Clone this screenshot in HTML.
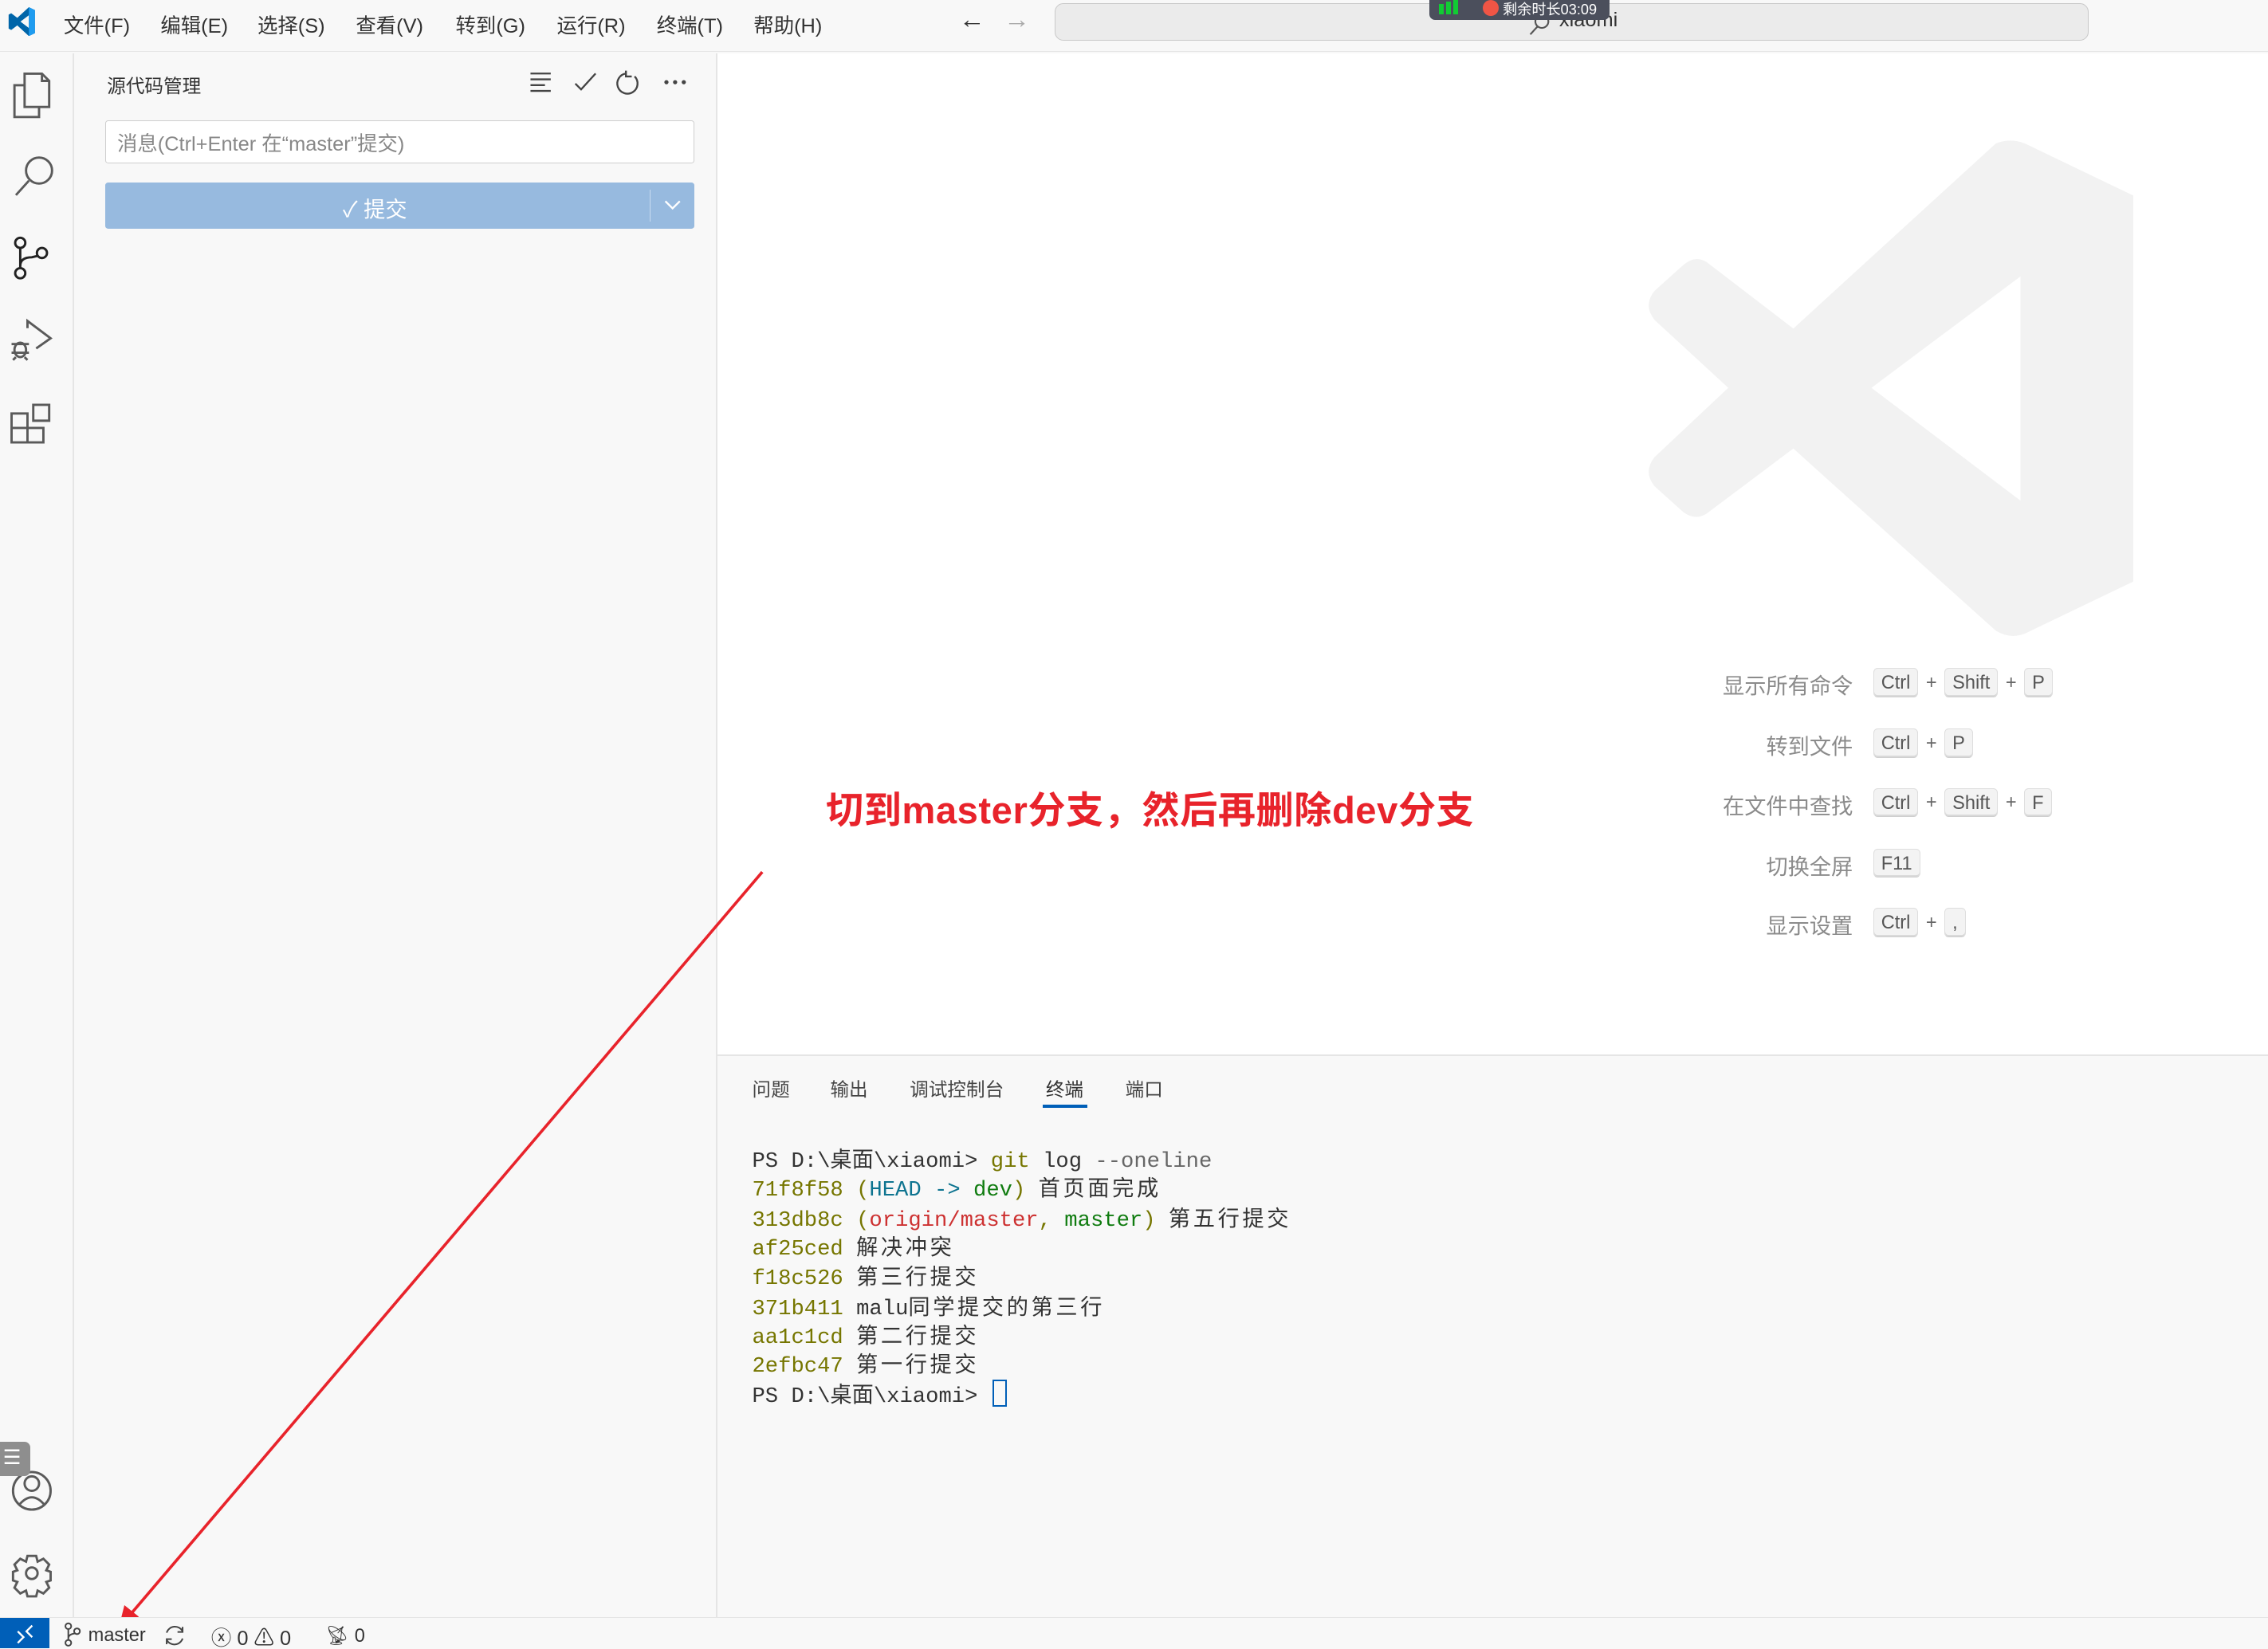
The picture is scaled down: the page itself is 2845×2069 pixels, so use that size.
<!DOCTYPE html>
<html><head><meta charset="utf-8">
<style>
*{margin:0;padding:0;box-sizing:border-box}
html,body{width:2845px;height:2069px;overflow:hidden;background:#f8f8f8}
#w{zoom:1.81441;width:1568px;height:1140px;position:relative;font-family:"Liberation Sans","Noto Sans CJK SC",sans-serif;color:#3b3b3b;background:#f8f8f8}
.a{position:absolute}
.menu span{position:absolute;top:7px;font-size:14px;color:#333}
.mono{font-family:"Liberation Mono","Noto Sans CJK SC",monospace}
.kl{position:absolute;right:287px;font-size:15px;color:#8b8b8b;white-space:nowrap}
.keys{position:absolute;left:1295px;font-size:13px;color:#555;white-space:nowrap}
.k{display:inline-block;height:20px;line-height:19px;padding:0 5px;background:#f3f3f3;border:1px solid #dedede;border-bottom-color:#cfcfcf;box-shadow:inset 0 -1px 0 #d8d8d8;border-radius:3px;vertical-align:middle}
.p{display:inline-block;width:18px;text-align:center;color:#666;vertical-align:middle}
.t{position:absolute;left:520px;font-size:15px;white-space:pre;color:#333}
.t i{font-style:normal;letter-spacing:2px}
.y{color:#767600}
.tab{position:absolute;top:743px;font-size:13px;color:#444}
</style></head><body><div id="w">
<div class="a" style="left:0;top:0;width:1568px;height:36px;background:#f8f8f8;border-bottom:1px solid #e5e5e5"></div>
<svg class="a" style="left:5px;top:5px" width="20" height="20" viewBox="0 0 100 100"><path d="M96 10 L75 0 L35 37 L14 21 L5 26 L5 74 L14 79 L35 63 L75 100 L96 90 Z M75 28 L75 72 L46 50 Z" fill="#0065a9" fill-rule="evenodd"/><path d="M75 0 L96 10 L96 90 L75 100 Z" fill="#1f9cf0"/></svg>
<div class="menu"><span style="left:44px">文件(F)</span><span style="left:111px">编辑(E)</span><span style="left:178px">选择(S)</span><span style="left:246px">查看(V)</span><span style="left:315px">转到(G)</span><span style="left:385px">运行(R)</span><span style="left:454px">终端(T)</span><span style="left:521px">帮助(H)</span></div>
<div class="a" style="left:663px;top:3px;font-size:18px;color:#333">←</div>
<div class="a" style="left:694px;top:3px;font-size:18px;color:#aaa">→</div>
<div class="a" style="left:729px;top:2px;width:715px;height:26px;background:#ebebeb;border:1px solid #c8c8c8;border-radius:6px"></div>
<svg class="a" style="left:1056px;top:9px" width="16" height="16" viewBox="0 0 16 16"><circle cx="10" cy="6" r="4.5" fill="none" stroke="#555" stroke-width="1.2"/><path d="M7 9.5 L2 15" stroke="#555" stroke-width="1.2"/></svg>
<div class="a" style="left:1078px;top:6px;font-size:14px;color:#333">xiaomi</div>
<div class="a" style="left:988px;top:0;width:125px;height:14px;background:#4b4f5c;border-radius:0 0 4px 4px"></div>
<div class="a" style="left:995px;top:3px;width:3px;height:7px;background:#1c3"></div><div class="a" style="left:1000px;top:1px;width:3px;height:9px;background:#1c3"></div><div class="a" style="left:1005px;top:0px;width:3px;height:10px;background:#1c3"></div>
<div class="a" style="left:1025px;top:0;width:11px;height:11px;border-radius:50%;background:#f05545"></div>
<div class="a" style="left:1039px;top:-1px;font-size:10px;color:#fff;white-space:nowrap">剩余时长03:09</div>
<div class="a" style="left:50px;top:37px;width:1px;height:1081px;background:#e5e5e5"></div>
<svg class="a" style="left:0;top:37px" width="50" height="1081" viewBox="0 37 50 1081" fill="none" stroke="#5a5a5a" stroke-width="1.6">
<path d="M17 59 H10 V81 H27 V74"/><path d="M17 51 H29 L34 56 V74 H17 Z M29 51 V56 H34"/>
<circle cx="27" cy="118" r="9"/><path d="M20 125 L11 135"/>
<circle cx="14" cy="168" r="3.5" stroke="#222"/><circle cx="14" cy="189" r="3.5" stroke="#222"/><circle cx="29" cy="175" r="3.5" stroke="#222"/><path d="M14 171.5 V185.5 M14 184 Q14 178 22 178 L26 177" stroke="#222"/>
<path d="M19 227 V222 L35 234 L25 241"/><ellipse cx="14" cy="242" rx="4" ry="5"/><path d="M8 238 H20 M8 244 H20 M9 249 L11 247 M19 249 L17 247"/>
<path d="M8 286 H19 V306 H8 Z M8 296 H30 V306 H19 M23 280 H34 V291 H23 Z"/>
<circle cx="22" cy="1031" r="13"/><circle cx="22" cy="1026" r="5"/><path d="M13 1041 Q22 1030 31 1041"/>
<circle cx="22" cy="1088" r="4"/><path d="M19 1076 H25 L26 1080 L30 1078 L34 1082 L32 1086 L35 1087 V1093 L32 1094 L34 1098 L30 1102 L26 1100 L25 1104 H19 L18 1100 L14 1102 L10 1098 L12 1094 L9 1093 V1087 L12 1086 L10 1082 L14 1078 L18 1080 Z"/>
</svg>
<div class="a" style="left:0;top:997px;width:21px;height:24px;background:#8e8e8e;border-radius:0 4px 4px 0"></div>
<div class="a" style="left:2px;top:1000px;font-size:14px;color:#fff;line-height:17px">☰</div>
<div class="a" style="left:495px;top:37px;width:1px;height:1081px;background:#e5e5e5"></div>
<div class="a" style="left:74px;top:49px;font-size:13px;color:#333">源代码管理</div>
<svg class="a" style="left:364px;top:47px" width="115" height="20" viewBox="0 0 115 20" fill="none" stroke="#444" stroke-width="1.3"><path d="M3 4 H17 M3 8 H17 M3 12 H13 M3 16 H17"/><path d="M34 11 L38 15 L48 4"/><path d="M69 4 A7 7 0 1 0 75 6 M69 2 V6 H73"/><circle cx="97" cy="10" r="0.8" fill="#444"/><circle cx="103" cy="10" r="0.8" fill="#444"/><circle cx="109" cy="10" r="0.8" fill="#444"/></svg>
<div class="a" style="left:73px;top:83px;width:407px;height:30px;background:#fff;border:1px solid #cecece;border-radius:2px"></div>
<div class="a" style="left:81px;top:89px;font-size:14px;color:#888">消息(Ctrl+Enter 在“master”提交)</div>
<div class="a" style="left:73px;top:126px;width:407px;height:32px;background:#97badf;border-radius:2px"></div>
<div class="a" style="left:237px;top:132px;font-size:15px;color:#fff">✓ 提交</div>
<div class="a" style="left:449px;top:131px;width:1px;height:22px;background:#c8dcf0"></div>
<svg class="a" style="left:458px;top:136px" width="14" height="12"><path d="M2 3 L7 8 L12 3" fill="none" stroke="#fff" stroke-width="1.3"/></svg>
<div class="a" style="left:496px;top:37px;width:1072px;height:692px;background:#fff"></div>
<svg class="a" style="left:1130px;top:88px" width="360" height="360" viewBox="1130 88 360 360"><path fill="#f2f2f2" fill-rule="evenodd" d="M1380 99 Q1390 95 1400 99 L1475 135 L1475 402 L1400 438 Q1390 442 1380 436 L1240 310 L1180 355 Q1172 360 1164 354 L1144 336 Q1136 326 1144 316 L1195 268 L1144 221 Q1136 211 1144 201 L1164 183 Q1172 176 1180 181 L1240 227 Z M1397 191 L1294 268 L1397 346 Z"/></svg>
<div class="kl" style="top:462px">显示所有命令</div><div class="keys" style="top:462px"><span class="k">Ctrl</span><span class="p">+</span><span class="k">Shift</span><span class="p">+</span><span class="k">P</span></div>
<div class="kl" style="top:504px">转到文件</div><div class="keys" style="top:504px"><span class="k">Ctrl</span><span class="p">+</span><span class="k">P</span></div>
<div class="kl" style="top:545px">在文件中查找</div><div class="keys" style="top:545px"><span class="k">Ctrl</span><span class="p">+</span><span class="k">Shift</span><span class="p">+</span><span class="k">F</span></div>
<div class="kl" style="top:587px">切换全屏</div><div class="keys" style="top:587px"><span class="k">F11</span></div>
<div class="kl" style="top:628px">显示设置</div><div class="keys" style="top:628px"><span class="k">Ctrl</span><span class="p">+</span><span class="k">,</span></div>
<div class="a" style="left:571px;top:539px;font-size:26px;font-weight:bold;color:#e8232b;white-space:nowrap;letter-spacing:0.3px">切到master分支，然后再删除dev分支</div>
<div class="a" style="left:496px;top:729px;width:1072px;height:1px;background:#e5e5e5"></div>
<div class="tab" style="left:520px">问题</div><div class="tab" style="left:574px">输出</div><div class="tab" style="left:629px">调试控制台</div><div class="tab" style="left:723px;color:#333">终端</div><div class="tab" style="left:778px">端口</div>
<div class="a" style="left:721px;top:764px;width:31px;height:2px;background:#005fb8"></div>
<div class="t mono" style="top:789px">PS D:\桌面\xiaomi&gt; <span class="y">git</span> log <span style="color:#666">--oneline</span></div>
<div class="t mono" style="top:809px"><span class="y">71f8f58 (</span><span style="color:#0e7490">HEAD -&gt; </span><span style="color:#107c10">dev</span><span class="y">)</span> <i>首页面完成</i></div>
<div class="t mono" style="top:830px"><span class="y">313db8c (</span><span style="color:#cd3131">origin/master</span><span class="y">, </span><span style="color:#107c10">master</span><span class="y">)</span> <i>第五行提交</i></div>
<div class="t mono" style="top:850px"><span class="y">af25ced</span> <i>解决冲突</i></div>
<div class="t mono" style="top:870px"><span class="y">f18c526</span> <i>第三行提交</i></div>
<div class="t mono" style="top:891px"><span class="y">371b411</span> malu<i>同学提交的第三行</i></div>
<div class="t mono" style="top:911px"><span class="y">aa1c1cd</span> <i>第二行提交</i></div>
<div class="t mono" style="top:931px"><span class="y">2efbc47</span> <i>第一行提交</i></div>
<div class="t mono" style="top:952px">PS D:\桌面\xiaomi&gt;</div>
<div class="a" style="left:686px;top:954px;width:10px;height:19px;border:1.5px solid #005fb8"></div>
<svg class="a" style="left:0;top:0" width="1568" height="1140"><path d="M527 603 L88 1119" stroke="#e8232b" stroke-width="2"/><path d="M82 1126 L86 1110 L96 1118 Z" fill="#e8232b"/></svg>
<div class="a" style="left:0;top:1118px;width:1568px;height:22px;background:#f8f8f8;border-top:1px solid #e5e5e5"></div>
<div class="a" style="left:0;top:1119px;width:34px;height:21px;background:#005fb8"></div>
<svg class="a" style="left:8px;top:1122px" width="18" height="16"><path d="M4 6 L8 10 L4 14 M14 2 L10 6 L14 10" fill="none" stroke="#fff" stroke-width="1.3"/></svg>
<svg class="a" style="left:40px;top:1121px" width="100" height="18" fill="none" stroke="#444" stroke-width="1.1"><circle cx="7" cy="3.5" r="2"/><circle cx="7" cy="15" r="2"/><circle cx="13" cy="7" r="2"/><path d="M7 5.5 V13 M7 12 Q7 9 12 8.5"/><path d="M75 8 A6 6 0 0 1 86 7 M86 12 A6 6 0 0 1 75 13 M86 4 V7.5 H82.5 M75 16 V12.5 H78.5"/></svg>
<div class="a" style="left:61px;top:1123px;font-size:13px;color:#333">master</div>
<div class="a" style="left:146px;top:1122px;font-size:14px;color:#333">ⓧ 0 ⚠ 0</div>
<div class="a" style="left:225px;top:1123px;font-size:13px;color:#333">📡︎ 0</div>
</div></body></html>
